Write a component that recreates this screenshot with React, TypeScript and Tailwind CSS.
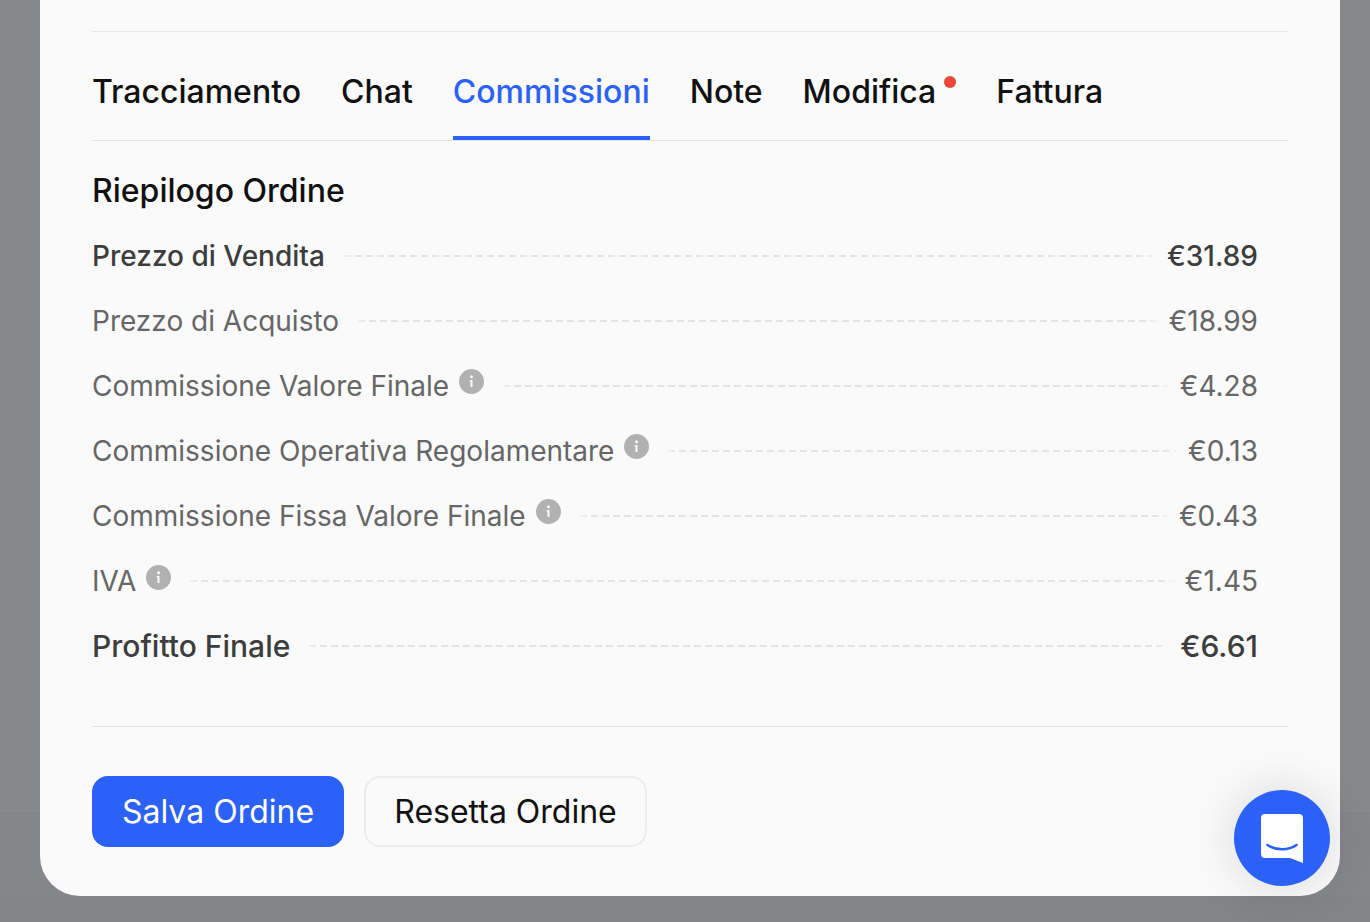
const tabs = ["Tracciamento", "Chat", "Commissioni", "Note", "Modifica", "Fattura"];

const rows = [
  { label: "Prezzo di Vendita", value: "€31.89", labelClass: "text-[28px] font-medium text-[#3d3d3d]", valueClass: "text-[28px] font-medium text-[#3d3d3d]", info: false },
  { label: "Prezzo di Acquisto", value: "€18.99", labelClass: "text-[28px] text-[#666666]", valueClass: "text-[28px] text-[#666666]", info: false },
  { label: "Commissione Valore Finale", value: "€4.28", labelClass: "text-[28px] text-[#666666]", valueClass: "text-[28px] text-[#666666]", info: true },
  { label: "Commissione Operativa Regolamentare", value: "€0.13", labelClass: "text-[28px] text-[#666666]", valueClass: "text-[28px] text-[#666666]", info: true },
  { label: "Commissione Fissa Valore Finale", value: "€0.43", labelClass: "text-[28px] text-[#666666]", valueClass: "text-[28px] text-[#666666]", info: true },
  { label: "IVA", value: "€1.45", labelClass: "text-[28px] text-[#666666]", valueClass: "text-[28px] text-[#666666]", info: true },
  { label: "Profitto Finale", value: "€6.61", labelClass: "text-[30px] font-medium text-[#3d3d3d]", valueClass: "text-[30px] font-medium text-[#3d3d3d]", info: false },
];

function InfoIcon() {
  return (
    <svg viewBox="0 0 25 25" className="w-[25px] h-[25px] ml-[10px] mb-[8px] shrink-0">
      <circle cx="12.5" cy="12.5" r="12.5" fill="#b1b1b1" />
      <circle cx="12.5" cy="7.8" r="1.5" fill="#fafafa" />
      <path d="M10.8 11h2.7v7h-2v-5.2h-0.7z" fill="#fafafa" />
    </svg>
  );
}

export default function App() {
  return (
    <div className="relative h-[922px] w-full overflow-hidden bg-[#838487] font-['Inter',sans-serif]">
      <div className="h-[810px] bg-[#87888a]" />
      <div className="h-[87px] border-t border-[#8b8c8e] bg-[#858689]" />
      <div className="h-[25px] border-t border-[#7f8083] bg-[#838487]" />

      {/* modal */}
      <div className="absolute left-[40px] right-[30px] top-[-40px] h-[936px] rounded-b-[40px] bg-[#fafafa] px-[52px] pt-[71px]">
        <div className="border-t border-[#e6e6e6]">
          <div className="flex h-[109px] gap-[40px] border-b border-[#e4e4e4]">
            {tabs.map((t) => (
              <div
                key={t}
                className={
                  t === "Commissioni"
                    ? "flex items-center border-b-[4px] border-[#2b61f6] pt-[16px] text-[32px] font-medium text-[#2b61f6]"
                    : t === "Modifica"
                      ? "relative flex items-center pt-[12px] pr-[20px] text-[32px] font-medium text-[#111111]"
                      : "flex items-center pt-[12px] text-[32px] font-medium text-[#111111]"
                }
              >
                {t}
                {t === "Modifica" && (
                  <span className="absolute right-0 top-[44px] h-3 w-3 rounded-full bg-[#ef4438]" />
                )}
              </div>
            ))}
          </div>

          <h2 className="mt-[30px] text-[32px] leading-[40px] font-medium text-[#111111]">Riepilogo Ordine</h2>

          <div className="mt-[12px] pr-[30px]">
            {rows.map((r) => (
              <div key={r.label} className="flex h-[65.1px] items-center">
                <span className={r.labelClass}>{r.label}</span>
                {r.info && <InfoIcon />}
                <div className="ml-[8px] mr-[4px] h-[2px] flex-1 bg-[repeating-linear-gradient(90deg,#e3e3e3_0_7px,transparent_7px_11px)] [mask-image:linear-gradient(90deg,transparent,transparent_6px,#000_20px,#000_calc(100%-20px),transparent_calc(100%-4px))]" />
                <span className={r.valueClass}>{r.value}</span>
              </div>
            ))}
          </div>

          <div className="mt-[47px] border-t border-[#e4e4e4] pt-[49px]">
            <div className="flex gap-[20px]">
              <button className="h-[71px] w-[252px] rounded-[16px] bg-[#2b61f6] pt-[2px] text-[32px] text-white">Salva Ordine</button>
              <button className="h-[71px] w-[283px] rounded-[16px] border-2 border-[#ececec] bg-[#fafafa] pt-[2px] text-[32px] text-[#111111]">
                Resetta Ordine
              </button>
            </div>
          </div>
        </div>
      </div>

      {/* chat launcher */}
      <div className="absolute left-[1234px] top-[790px] flex h-[96px] w-[96px] items-center justify-center rounded-full bg-[#2b61f6] shadow-[0_0_50px_rgba(0,0,0,0.14)]">
        <svg viewBox="0 0 42 49" className="h-[49px] w-[42px]">
          <path d="M4 0h34a4 4 0 0 1 4 4v45l-13-5H4a4 4 0 0 1-4-4V4a4 4 0 0 1 4-4z" fill="#ffffff" />
          <path d="M6.5 31c8 5.6 21 5.6 29 0" fill="none" stroke="#2b61f6" strokeWidth="2.6" strokeLinecap="round" />
        </svg>
      </div>
    </div>
  );
}
